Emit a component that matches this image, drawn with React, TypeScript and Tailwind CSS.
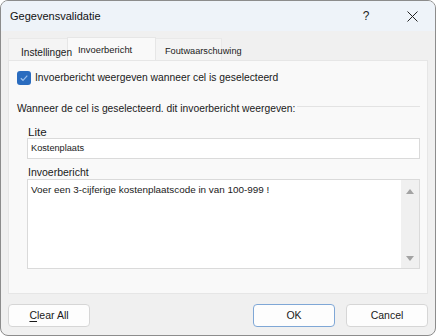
import React from "react";

const font = { fontFamily: '"Liberation Sans", Arial, sans-serif' };

const Button = ({ children, primary }: { children: React.ReactNode; primary?: boolean }) => (
  <button
    className={`w-[82px] h-[23px] rounded-[4px] bg-[#fdfdfd] text-[10.5px] text-[#1a1a1a] border ${
      primary ? "border-[#7fa7d6]" : "border-[#d6d6d6]"
    }`}
  >
    {children}
  </button>
);

export default function App() {
  return (
    <div
      className="w-[436px] h-[336px] flex flex-col bg-[#f0f0f0] border border-[#8c8c8c] rounded-[8px] overflow-hidden"
      style={font}
    >
      {/* title bar */}
      <div className="h-[30px] flex items-center bg-[#eef3f9] shrink-0">
        <span className="pl-[9px] text-[11px] text-[#111]">Gegevensvalidatie</span>
        <div className="ml-auto flex h-full">
          <div className="w-[46px] flex items-center justify-center text-[12px] text-[#222]">?</div>
          <div className="w-[46px] flex items-center justify-center">
            <svg width="11" height="11" viewBox="0 0 11 11">
              <path d="M0.5 0.5 L10.5 10.5 M10.5 0.5 L0.5 10.5" stroke="#222" strokeWidth="1" />
            </svg>
          </div>
        </div>
      </div>

      {/* tabs */}
      <div className="h-[29px] flex items-end pl-[7px] shrink-0">
        <div className="relative z-10 w-[59px] h-[22px] bg-[#f4f4f4] border border-b-0 border-r-0 border-[#e9e9e9] pl-[12px] pt-[6px] text-[10.1px] text-[#1a1a1a] whitespace-nowrap">
          Instellingen
        </div>
        <div className="w-[89px] h-[23px] bg-[#f9f9f9] border border-b-0 border-[#e6e6e6] pl-[10px] pt-[5px] text-[9.4px] text-[#1a1a1a] whitespace-nowrap">
          Invoerbericht
        </div>
        <div className="w-[66px] h-[22px] bg-[#f4f4f4] border border-b-0 border-l-0 border-[#e9e9e9] pl-[9px] pt-[6px] text-[9.2px] text-[#1a1a1a] whitespace-nowrap">
          Foutwaarschuwing
        </div>
      </div>

      {/* panel */}
      <div className="mx-[7px] h-[234px] bg-[#f9f9f9] border border-[#e6e6e6] pr-[7px] shrink-0">
        <div className="flex items-center mt-[10px] pl-[8px]">
          <div className="w-[14px] h-[14px] rounded-[3px] bg-[#2a6cbf] flex items-center justify-center">
            <svg width="10" height="10" viewBox="0 0 10 10">
              <path d="M1.8 5.2 L4 7.3 L8.3 2.7" fill="none" stroke="#9cc0ec" strokeWidth="1.2" />
            </svg>
          </div>
          <span className="ml-[4px] text-[10.3px] text-[#1a1a1a] leading-[14px]">
            Invoerbericht weergeven wanneer cel is geselecteerd
          </span>
        </div>

        <div className="flex items-start mt-[18px] pl-[8px]">
          <span className="text-[10.3px] leading-[12px] text-[#1a1a1a]">
            Wanneer de cel is geselecteerd. dit invoerbericht weergeven:
          </span>
          <div className="flex-1 h-px bg-[#e3e3e3] mt-[3px] ml-[2px]" />
        </div>

        <div className="ml-[18px] mt-[10px] flex flex-col">
          <span className="pl-[1px] text-[11.6px] leading-[13px] text-[#1a1a1a]">Lite</span>
          <div className="h-[21px] bg-white border border-[#dadada] pl-[3px] flex items-center text-[9.2px] text-[#1a1a1a]">
            Kostenplaats
          </div>

          <span className="mt-[7px] pl-[1px] text-[10.5px] leading-[13px] text-[#1a1a1a]">Invoerbericht</span>
          <div className="h-[90px] bg-white border border-[#dadada] flex">
            <div className="flex-1 pl-[3px] pt-[4px] text-[9.9px] leading-[12px] text-[#1a1a1a]">
              Voer een 3-cijferige kostenplaatscode in van 100-999 !
            </div>
            <div className="w-[18px] bg-[#f0f0f0] flex flex-col items-center justify-between pt-[9px] pb-[7px]">
              <svg width="8" height="5" viewBox="0 0 8 5">
                <path d="M0 5 L4 0 L8 5 Z" fill="#a3a3a3" />
              </svg>
              <svg width="8" height="5" viewBox="0 0 8 5">
                <path d="M0 0 L4 5 L8 0 Z" fill="#a3a3a3" />
              </svg>
            </div>
          </div>
        </div>
      </div>

      {/* footer */}
      <div className="flex px-[7px] pt-[10px]">
        <Button>
          <span className="underline underline-offset-2">C</span>lear All
        </Button>
        <div className="ml-auto flex gap-[11px]">
          <Button primary>OK</Button>
          <Button>Cancel</Button>
        </div>
      </div>
    </div>
  );
}
